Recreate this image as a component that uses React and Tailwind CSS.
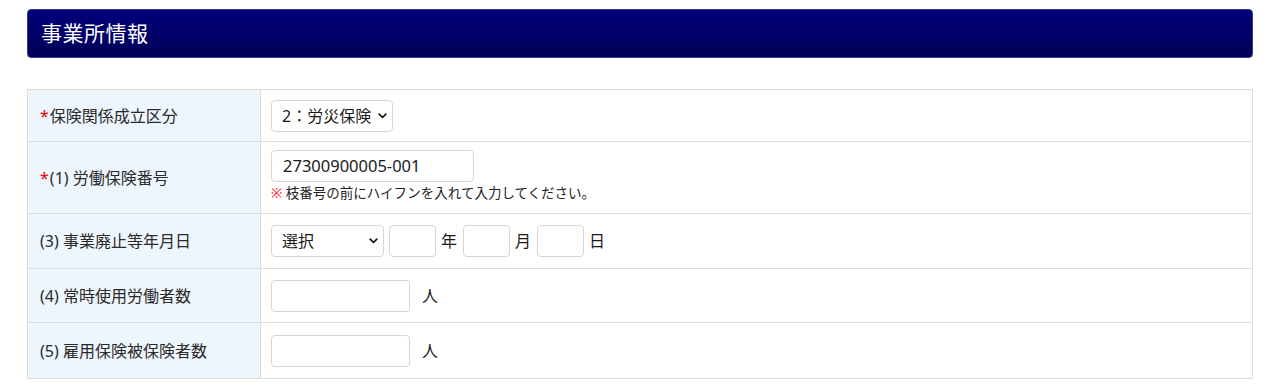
import React from "react";

const font = { fontFamily: '"Noto Sans", "Noto Sans CJK JP", sans-serif' };

function Chevron() {
  return (
    <svg width="9" height="6" viewBox="0 0 9 6" className="pointer-events-none absolute right-[5px] top-1/2 -translate-y-1/2">
      <path d="M1.2 1.2 L4.5 4.5 L7.8 1.2" fill="none" stroke="#111" strokeWidth="1.7" strokeLinecap="round" strokeLinejoin="round" />
    </svg>
  );
}

function Select({ text, w }) {
  return (
    <div className={`relative h-[32px] ${w} rounded-[4px] border border-[#d6d6d6] bg-white flex items-center pl-[10px] text-[16px] text-[#1a1a1a]`}>
      <span>{text}</span>
      <Chevron />
    </div>
  );
}

function Input({ w, value }) {
  return (
    <div className={`h-[32px] ${w} rounded-[4px] border border-[#d6d6d6] bg-white flex items-center pl-[11px] text-[16.5px] text-[#1a1a1a]`}>
      {value}
    </div>
  );
}

function Row({ label, req, h, children, last }) {
  return (
    <div className={`flex ${last ? "" : "border-b border-[#dcdcdc]"}`} style={{ height: h }}>
      <div className="w-[233px] shrink-0 bg-[#edf5fd] border-r border-[#dcdcdc] flex items-center pl-[12px] text-[16px] text-[#2a2a2a]">
        {req && <span className="text-[#e60000] mr-[1px]">*</span>}
        <span>{label}</span>
      </div>
      <div className="flex-1 flex flex-col justify-center pl-[10px]">{children}</div>
    </div>
  );
}

export default function App() {
  return (
    <div className="w-[1280px] h-[387px] bg-white pt-[9px] px-[27px]" style={font}>
      <div className="h-[49px] rounded-[4px] bg-gradient-to-b from-[#00007a] to-[#000058] border border-[#3a3a80] flex items-center pl-[13px]">
        <span className="text-white text-[21px] tracking-[0.5px]">事業所情報</span>
      </div>
      <div className="mt-[31px] border border-[#dcdcdc]">
        <Row label="保険関係成立区分" req h={52}>
          <Select text="2：労災保険" w="w-[122px]" />
        </Row>
        <Row label="(1) 労働保険番号" req h={72}>
          <div className="-mt-[4px]"><Input w="w-[203px]" value="27300900005-001" /></div>
          <div className="mt-[5px] text-[13.5px] text-[#222] leading-none">
            <span className="text-[#ff1a1a]">※</span> 枝番号の前にハイフンを入れて入力してください。
          </div>
        </Row>
        <Row label="(3) 事業廃止等年月日" h={55}>
          <div className="flex items-center text-[16px] text-[#1a1a1a]">
            <Select text="選択" w="w-[113px]" />
            <div className="ml-[5px]"><Input w="w-[47px]" /></div>
            <span className="ml-[5px] mr-[6px]">年</span>
            <Input w="w-[47px]" />
            <span className="ml-[5px] mr-[6px]">月</span>
            <Input w="w-[47px]" />
            <span className="ml-[5px]">日</span>
          </div>
        </Row>
        <Row label="(4) 常時使用労働者数" h={54}>
          <div className="flex items-center text-[16px] text-[#1a1a1a]">
            <Input w="w-[139px]" />
            <span className="ml-[12px]">人</span>
          </div>
        </Row>
        <Row label="(5) 雇用保険被保険者数" h={55} last>
          <div className="flex items-center text-[16px] text-[#1a1a1a]">
            <Input w="w-[139px]" />
            <span className="ml-[12px]">人</span>
          </div>
        </Row>
      </div>
    </div>
  );
}
